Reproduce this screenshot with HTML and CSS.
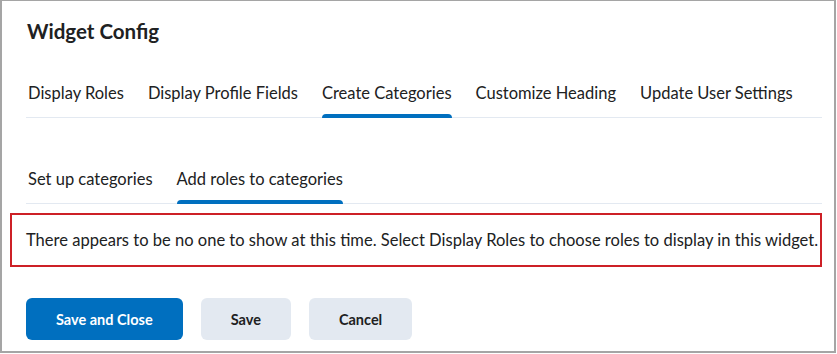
FILE: index.html
```html
<!DOCTYPE html>
<html lang="en">
  <head>
    <meta charset="utf-8" />
    <title>Widget Config</title>
    <link rel="stylesheet" href="styles.css">
  </head>
  <body>
    <div class="dialog">
      <h1 class="title">Widget Config</h1>

      <nav class="tabs">
        <span class="tab">Display Roles</span>
        <span class="tab">Display Profile Fields</span>
        <span class="tab active">Create Categories</span>
        <span class="tab">Customize Heading</span>
        <span class="tab">Update User Settings</span>
      </nav>

      <nav class="tabs sub">
        <span class="tab">Set up categories</span>
        <span class="tab active">Add roles to categories</span>
      </nav>

      <div class="alert">
        There appears to be no one to show at this time. Select Display Roles
        to choose roles to display in this widget.
      </div>

      <div class="actions">
        <button class="btn primary">Save and Close</button>
        <button class="btn">Save</button>
        <button class="btn">Cancel</button>
      </div>
    </div>
  </body>
</html>
```

FILE: styles.css
```css
html,
body {
  margin: 0;
  padding: 0;
}

body {
  background-color: white;
  color: #202122;
  font-family: Lato, "Liberation Sans", sans-serif;
}

.dialog {
  box-sizing: border-box;
  width: 836px;
  height: 353px;
  border: 2px solid #a5a5a5;
  border-top-width: 1px;
  padding: 0 12px 0 8px;
}

.title {
  margin: 0;
  padding: 17px 0 0 17px;
  font-size: 20.5px;
  font-weight: 700;
  line-height: 26px;
}

.tabs {
  display: flex;
  gap: 24px;
  margin: 38px 0 0 16px;
  padding-left: 2px;
  border-bottom: 1px solid #e3e9f1;
}

.tabs.sub {
  margin-top: 50px;
}

.tab {
  position: relative;
  font-size: 16.5px;
  line-height: 20px;
  padding: 1px 0 14px;
  white-space: nowrap;
}

.tab.active::after {
  content: "";
  position: absolute;
  left: 0;
  right: 0;
  bottom: -1px;
  height: 4px;
  background-color: #006fbf;
  border-radius: 4px 4px 0 0;
}

.alert {
  margin-top: 9px;
  border: 2px solid #cd2026;
  padding: 15px 14px;
  font-size: 16.55px;
  line-height: 20px;
  white-space: nowrap;
}

.actions {
  display: flex;
  gap: 18px;
  margin: 31px 0 0 16px;
}

.btn {
  height: 42px;
  padding: 0 30px;
  border: none;
  border-radius: 6px;
  background-color: #e3e9f1;
  color: #202122;
  font-family: inherit;
  font-size: 14.5px;
  font-weight: 700;
}

.btn.primary {
  background-color: #006fbf;
  color: white;
}
```
